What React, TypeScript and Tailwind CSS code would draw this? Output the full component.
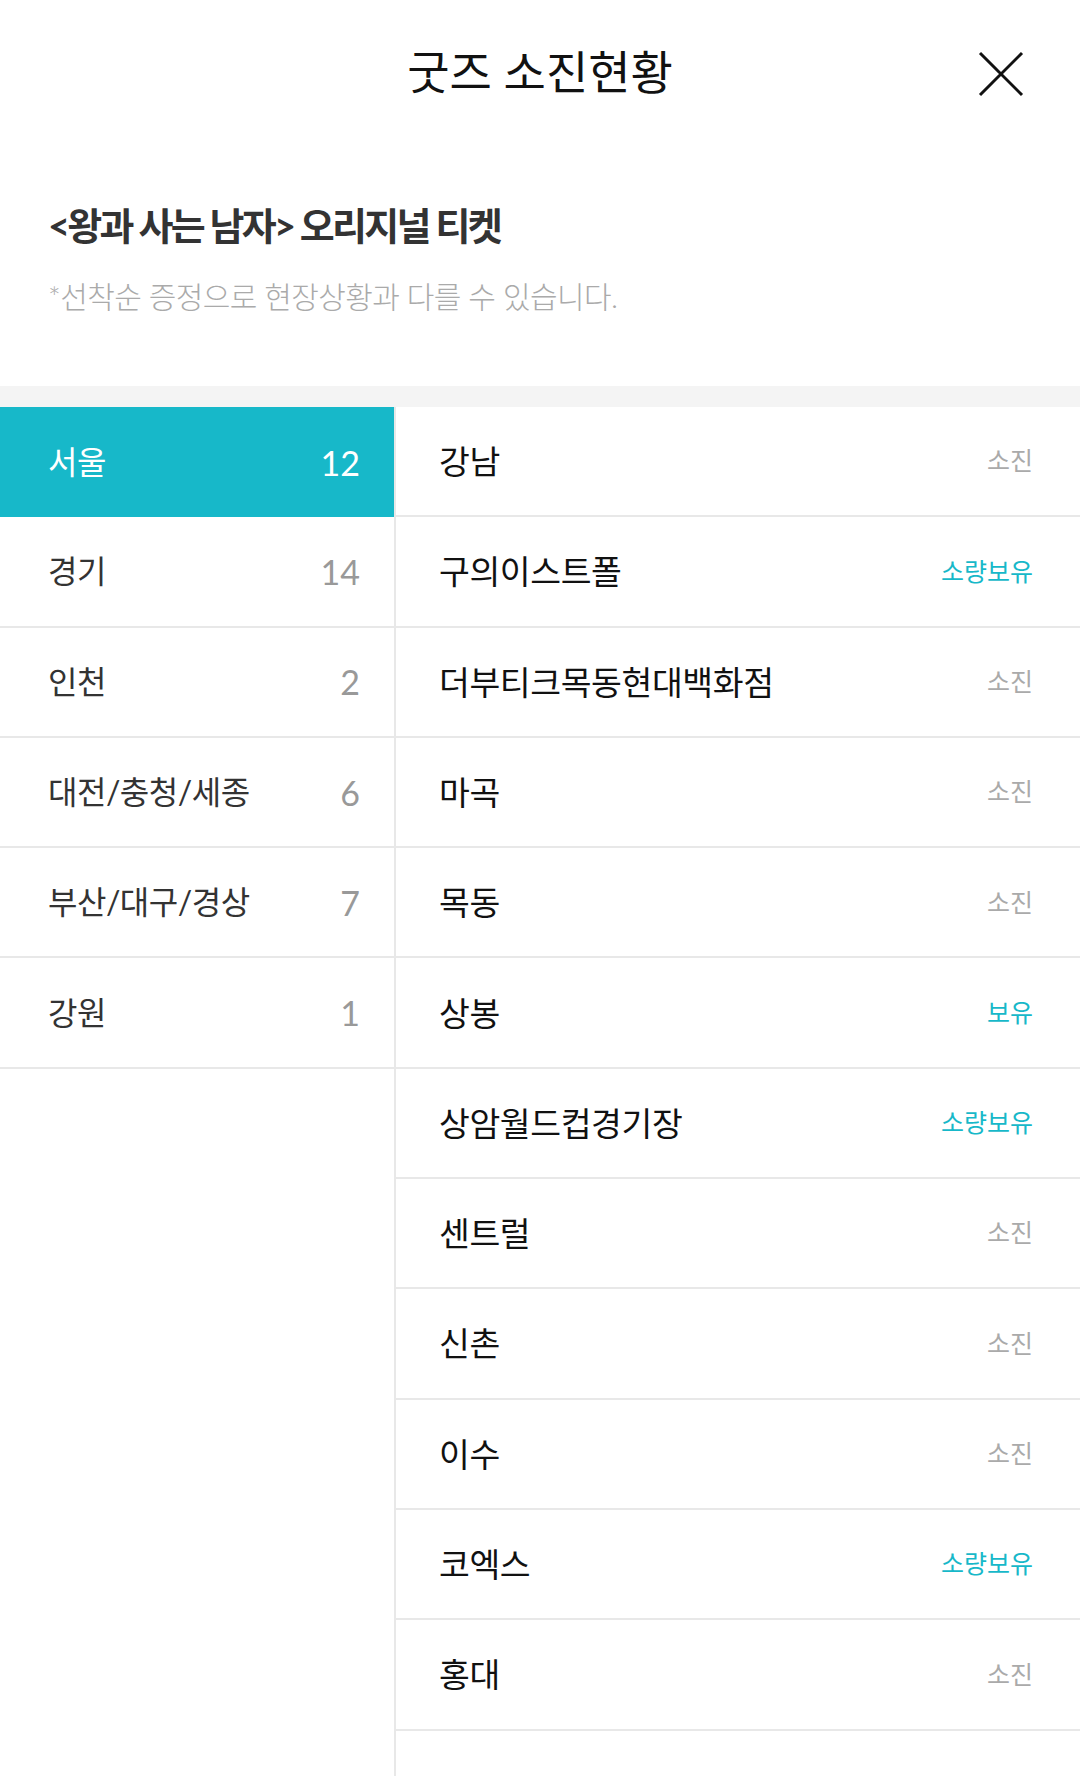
import React, { useState } from 'react';

type Store = { name: string; status: '소진' | '소량보유' | '보유' };

const regions = [
  { name: '서울', count: 12 },
  { name: '경기', count: 14 },
  { name: '인천', count: 2 },
  { name: '대전/충청/세종', count: 6 },
  { name: '부산/대구/경상', count: 7 },
  { name: '강원', count: 1 },
];

const seoulStores: Store[] = [
  { name: '강남', status: '소진' },
  { name: '구의이스트폴', status: '소량보유' },
  { name: '더부티크목동현대백화점', status: '소진' },
  { name: '마곡', status: '소진' },
  { name: '목동', status: '소진' },
  { name: '상봉', status: '보유' },
  { name: '상암월드컵경기장', status: '소량보유' },
  { name: '센트럴', status: '소진' },
  { name: '신촌', status: '소진' },
  { name: '이수', status: '소진' },
  { name: '코엑스', status: '소량보유' },
  { name: '홍대', status: '소진' },
];

const CloseIcon = () => (
  <svg width="46" height="46" viewBox="0 0 46 46" fill="none">
    <line x1="2" y1="2" x2="44" y2="44" stroke="#111" strokeWidth="3" />
    <line x1="44" y1="2" x2="2" y2="44" stroke="#111" strokeWidth="3" />
  </svg>
);

const App: React.FC = () => {
  const [active, setActive] = useState(0);

  return (
    <div className="min-h-[1776px] w-[1080px] bg-white font-['Lato','Noto_Sans_CJK_KR',sans-serif] flex flex-col">
      {/* header */}
      <div className="relative h-[146px] flex items-center justify-center">
        <h1 className="text-[46px] leading-none text-[#111] tracking-[0px] -mt-[2px]">굿즈 소진현황</h1>
        <button className="absolute right-[56px] top-[51px]">
          <CloseIcon />
        </button>
      </div>

      {/* title */}
      <div className="px-[48px] pt-[56px] pb-[72px]">
        <h2 className="text-[38px] leading-[46px] font-bold text-[#333] tracking-[-2.7px]">
          &lt;왕과 사는 남자&gt; 오리지널 티켓
        </h2>
        <p className="mt-[30px] text-[30px] leading-[36px] font-light text-[#aaa] tracking-[-0.6px]">
          *선착순 증정으로 현장상황과 다를 수 있습니다.
        </p>
      </div>

      <div className="h-[21px] bg-[#f4f4f4]" />

      {/* lists */}
      <div className="flex flex-1">
        <ul className="w-[394px] shrink-0">
          {regions.map((r, i) => (
            <li key={r.name}>
              <button
                onClick={() => setActive(i)}
                className={
                  i === active
                    ? 'w-full h-[110.3px] flex items-center justify-between pl-[48px] pr-[34px] bg-[#17b8c9] text-white'
                    : 'w-full h-[110.3px] flex items-center justify-between pl-[48px] pr-[34px] border-b-2 border-[#e8e8e8] text-[#333]'
                }
              >
                <span className="text-[32px] tracking-[-0.5px]">{r.name}</span>
                <span className={i === active ? 'text-[34px] text-white' : 'text-[34px] text-[#999]'}>{r.count}</span>
              </button>
            </li>
          ))}
        </ul>

        <ul className="flex-1 border-l-2 border-[#e8e8e8]">
          {seoulStores.map((s) => (
            <li
              key={s.name}
              className="h-[110.3px] flex items-center justify-between pl-[43px] pr-[47px] border-b-2 border-[#e8e8e8]"
            >
              <span className="text-[33.5px] text-[#111] tracking-[-0.4px]">{s.name}</span>
              <span className={s.status === '소진' ? 'text-[25px] text-[#aaa]' : 'text-[25px] text-[#17b8c9]'}>
                {s.status}
              </span>
            </li>
          ))}
        </ul>
      </div>
    </div>
  );
};

export default App;
